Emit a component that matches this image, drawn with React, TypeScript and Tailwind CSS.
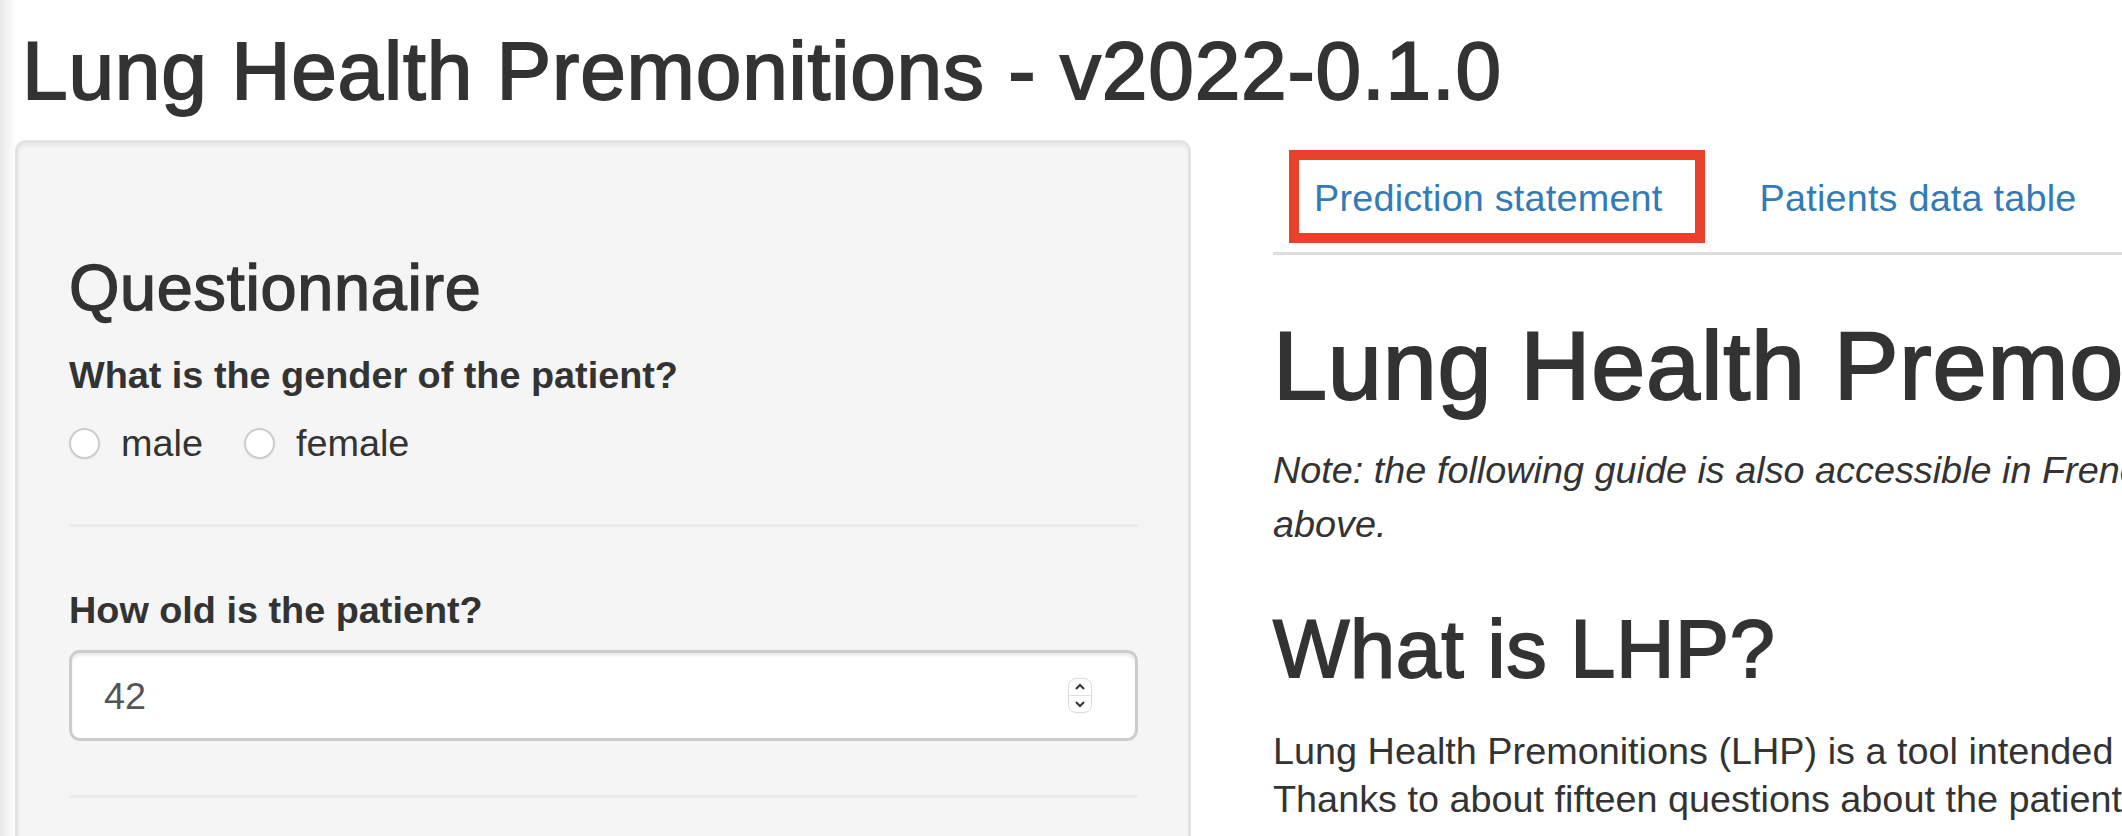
import React from 'react'

const Radio = ({ label, className = '' }: { label: string; className?: string }) => (
  <label className={'flex items-center ' + className}>
    <span className="h-[31px] w-[31px] rounded-full border-2 border-[#cdcdcd] bg-white shadow-[0_1px_2px_rgba(0,0,0,0.06)]" />
    <span className="ml-[21px]">{label}</span>
  </label>
)

const Spinner = () => (
  <div className="flex h-[35px] w-[24px] flex-col overflow-hidden rounded-[8px] border border-[#dadada] bg-white">
    <div className="flex flex-1 items-center justify-center border-b border-[#dedede]">
      <svg width="12" height="8" viewBox="0 0 12 8">
        <polyline points="2,6 6,2 10,6" fill="none" stroke="#333" strokeWidth="2" />
      </svg>
    </div>
    <div className="flex flex-1 items-center justify-center">
      <svg width="12" height="8" viewBox="0 0 12 8">
        <polyline points="2,2 6,6 10,2" fill="none" stroke="#333" strokeWidth="2" />
      </svg>
    </div>
  </div>
)

export default function App() {
  return (
    <div className="h-[836px] w-[2122px] overflow-hidden bg-[linear-gradient(to_right,#e8e8e8,#ffffff_16px)] font-['Liberation_Sans',Arial,sans-serif] text-[37.8px] text-[#333]">
      <h2 className="whitespace-nowrap pl-[22px] pt-[26px] text-[82px] leading-[89px] tracking-[0.8px] [-webkit-text-stroke:1.8px_#333]">
        Lung Health Premonitions - v2022-0.1.0
      </h2>

      <div className="mt-[25px] flex">
        {/* sidebar */}
        <div className="w-[1191px] flex-none pl-[15px]">
          <div className="h-[760px] rounded-[11px] border-[3px] border-[#e3e3e3] bg-[#f5f5f5] pl-[51px] pr-[50px] pt-[109px] shadow-[inset_0_3px_3px_rgba(0,0,0,0.05)]">
            <h3 className="text-[64.8px] leading-[71px] tracking-[0.7px] [-webkit-text-stroke:1.4px_#333]">Questionnaire</h3>

            <div className="mt-[25px] font-bold leading-[54px]">What is the gender of the patient?</div>
            <div className="mt-[14px] flex leading-[54px]">
              <Radio label="male" />
              <Radio label="female" className="ml-[41px]" />
            </div>

            <hr className="mt-[54px] border-0 border-t-[3px] border-[#ebebeb]" />

            <div className="mt-[56px] font-bold leading-[54px]">How old is the patient?</div>
            <div className="mt-[13px] flex h-[91px] items-center rounded-[11px] border-[3px] border-[#cccccc] bg-white pl-[32px] pr-[43px] text-[#555] shadow-[inset_0_3px_3px_rgba(0,0,0,0.075)]">
              <span className="flex-1 leading-[54px]">42</span>
              <Spinner />
            </div>

            <hr className="mt-[54px] border-0 border-t-[3px] border-[#ebebeb]" />
          </div>
        </div>

        {/* main panel */}
        <div className="ml-[82px] w-[2433px] flex-none">
          <ul className="flex whitespace-nowrap border-b-[3px] border-[#dddddd] text-[#337ab7]">
            <li className="relative">
              <a className="block pl-[41px] pr-[43px] pt-[31px] pb-[27px] leading-[54px] tracking-[0.2px]">Prediction statement</a>
              <div className="pointer-events-none absolute left-[16px] top-[10px] h-[93px] w-[416px] border-[10px] border-[#e9412a]" />
            </li>
            <li className="ml-[11px]">
              <a className="block px-[43px] pt-[31px] pb-[27px] leading-[54px] tracking-[0.2px]">Patients data table</a>
            </li>
            <li className="ml-[11px]">
              <a className="block px-[43px] pt-[31px] pb-[27px] leading-[54px]">Guide (French)</a>
            </li>
          </ul>

          <h1 className="mt-[57px] whitespace-nowrap text-[97.2px] leading-[107px] tracking-[0.8px] [-webkit-text-stroke:2px_#333]">
            Lung Health Premonitions
          </h1>
          <p className="mt-[24px] whitespace-nowrap italic leading-[54px]">
            Note: the following guide is also accessible in French by clicking on the "Guide (French)" tab
            <br />
            above.
          </p>
          <h2 className="mt-[54px] text-[81px] leading-[89px] tracking-[0.6px] [-webkit-text-stroke:1.8px_#333]">What is LHP?</h2>
          <p className="mt-[33px] whitespace-nowrap leading-[48px]">
            Lung Health Premonitions (LHP) is a tool intended to help doctors estimate the lung health of their patients.
            <br />
            Thanks to about fifteen questions about the patient, LHP gives a prediction statement.
          </p>
        </div>
      </div>
    </div>
  )
}
